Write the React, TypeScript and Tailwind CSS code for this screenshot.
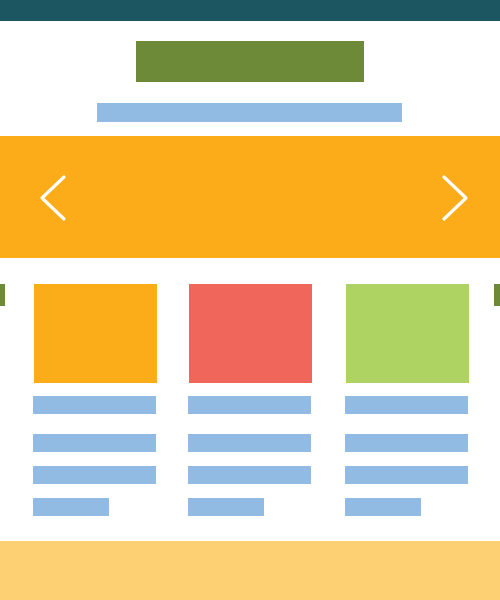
const cards = [
  { color: "bg-[#fbac19]", gapAfter: "mr-[31px]" },
  { color: "bg-[#f0665a]", gapAfter: "mr-[33px]" },
  { color: "bg-[#aed362]", gapAfter: "" },
];

function Chevron({ dir }: { dir: "left" | "right" }) {
  const d = dir === "left" ? "M25 3 L3 24 L25 45" : "M3 3 L25 24 L3 45";
  return (
    <svg width="30" height="48" viewBox="0 0 30 48" fill="none">
      <path d={d} stroke="white" strokeWidth="3.2" strokeLinecap="round" strokeLinejoin="round" />
    </svg>
  );
}

export default function App() {
  return (
    <div className="w-[500px] h-[600px] bg-white flex flex-col overflow-hidden">
      {/* Header bar */}
      <div className="h-[21px] bg-[#1c5660]" />

      {/* Logo + tagline */}
      <div className="flex flex-col">
        <div className="mt-[20px] ml-[136px] w-[228px] h-[41px] bg-[#6d8a38]" />
        <div className="mt-[21px] ml-[97px] w-[305px] h-[19px] bg-[#92bbe3]" />
      </div>

      {/* Slider */}
      <div className="mt-[14px] h-[122px] bg-[#fbac18] flex items-start justify-between pt-[38px] pl-[39px] pr-[29px]">
        <Chevron dir="left" />
        <Chevron dir="right" />
      </div>

      {/* Cards */}
      <div className="mt-[26px] flex items-start">
        <div className="w-[5px] h-[22px] bg-[#6d8a38] mr-[28px]" />
        {cards.map((c, i) => (
          <div key={i} className={`w-[124px] flex flex-col ${c.gapAfter}`}>
            <div className={`ml-[1px] w-[123px] h-[99px] ${c.color}`} />
            <div className="mt-[13px] w-[123px] h-[18px] bg-[#92bbe3]" />
            <div className="mt-[20px] w-[123px] h-[18px] bg-[#92bbe3]" />
            <div className="mt-[14px] w-[123px] h-[18px] bg-[#92bbe3]" />
            <div className="mt-[14px] w-[76px] h-[18px] bg-[#92bbe3]" />
          </div>
        ))}
        <div className="ml-[25px] w-[6px] h-[22px] bg-[#6d8a38]" />
      </div>

      {/* Footer */}
      <div className="mt-[25px] h-[59px] bg-[#fcd073]" />
    </div>
  );
}
